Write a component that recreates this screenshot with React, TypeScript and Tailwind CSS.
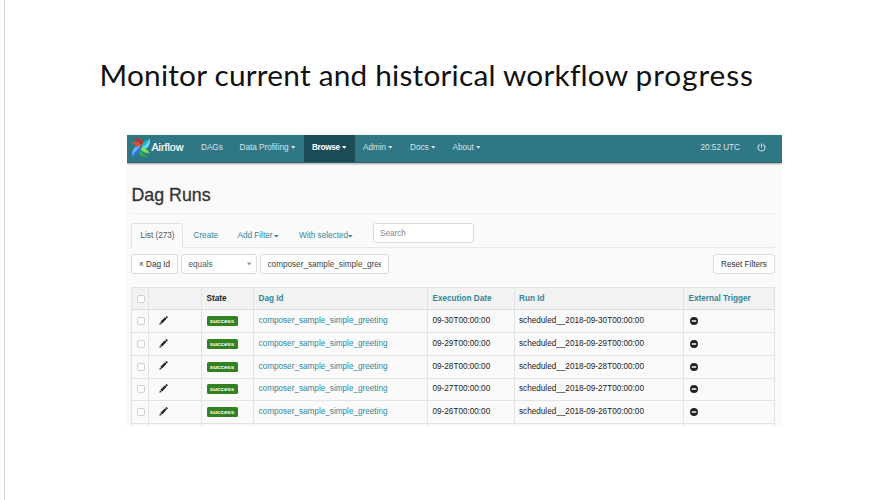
import React from 'react';

const dates = ['30', '29', '28', '27', '26'];

function Caret({ className = '' }: { className?: string }) {
  return (
    <svg viewBox="0 0 5 3" className={`h-[2.8px] w-[4.6px] shrink-0 ${className}`}>
      <path d="M0 0h5L2.5 3z" fill="currentColor" />
    </svg>
  );
}

function Pinwheel() {
  return (
    <svg viewBox="0 0 54 58" className="ml-[5.5px] mt-[3.5px] h-[19.5px] w-[18px] shrink-0">
      <path d="M27 28C20 25 8 24 0 12C10 12 20 11 29 22Z" fill="#f04a2c" />
      <path d="M27 28C31 20 24 12 5 3C20-2 39 5 35 19Z" fill="#cc2f22" />
      <path d="M27 28C28 18 38 6 54 3C48 12 46 21 38 28Z" fill="#19b8cf" />
      <path d="M27 28C37 26 45 18 54 3C56 20 46 35 35 33Z" fill="#5fdcf0" />
      <path d="M27 28C36 29 47 33 53 46C43 44 34 44 27 36Z" fill="#7be34a" />
      <path d="M27 28C24 38 32 47 48 55C32 59 18 52 20 39Z" fill="#2cb04b" />
      <path d="M27 28C28 39 18 51 2 55C8 46 9 37 16 29Z" fill="#2f70ea" />
      <path d="M27 28C19 30 10 38 2 55C-3 38 8 23 20 24Z" fill="#5fb0fa" />
      <circle cx="27" cy="28" r="2.5" fill="#315c72" />
    </svg>
  );
}

function Power() {
  return (
    <svg viewBox="0 0 24 24" className="h-[9px] w-[9px]" fill="none" stroke="currentColor" strokeWidth="2.8">
      <path d="M12 1v11M7 4a9.3 9.3 0 1 0 10 0" />
    </svg>
  );
}

function Pencil() {
  return (
    <svg viewBox="0 0 24 24" className="h-[9px] w-[9px]" fill="#222">
      <path d="M1 23l1.6-6.4 4.6 4.6zM3.8 15.2L16 3.4l4.2 4.2L8.2 19.8zM17.2 2.4l1.8-1.8q1-.8 2 0l2 2q.8 1 0 2l-1.8 1.8z" />
    </svg>
  );
}

function Minus() {
  return (
    <svg viewBox="0 0 16 16" className="h-[8px] w-[8px]">
      <circle cx="8" cy="8" r="8" fill="#222" />
      <path d="M3.5 6.5h9v3h-9z" fill="#fafafa" />
    </svg>
  );
}

function Box() {
  return <span className="block h-[8px] w-[8px] rounded-[2px] border border-[#d2d2d2] bg-white" />;
}

function Cell({ children, className = '' }: { children?: React.ReactNode; className?: string }) {
  return <div className={`flex items-center border-r border-[#e3e3e3] pl-[4.5px] ${className}`}>{children}</div>;
}

const cols = 'grid grid-cols-[17px_53px_52px_174px_86.5px_169.5px_91px]';

export default function App() {
  return (
    <div className="h-[500px] w-[896px] overflow-hidden bg-white pl-[4px]">
      <div className="h-full border-l border-[#d2d4dc]">
        <h1 className="h-[134px] whitespace-nowrap pl-[94.5px] pt-[57px] font-['Lato',sans-serif] text-[29.8px] leading-[36px] tracking-[0.22px] text-[#111]">
          Monitor current and historical workflow <span className="tracking-[0.9px]">progress</span>
        </h1>
        <div className="ml-[121.5px] h-[292px] w-[655px] overflow-hidden bg-[#fafafa] font-['Liberation_Sans',sans-serif] text-[8.18px] leading-[12px] text-[#333]">
          <nav className="mt-[0.5px] flex h-[28.5px] border-b border-[#28616c] bg-[#307786] text-[#d5e5e8] shadow-[0_1px_2px_rgba(0,0,0,0.35)]">
            <Pinwheel />
            <span className="w-[51px] pl-[1.5px] pt-[6px] text-[10.6px] text-white [-webkit-text-stroke:0.2px]">Airflow</span>
            <span className="w-[38.5px] pt-[7px]">DAGs</span>
            <span className="flex w-[64px] items-center whitespace-nowrap pb-[1px]">Data Profiling<Caret className="ml-[2px]" /></span>
            <span className="flex w-[51px] items-center bg-[#1b4b57] pb-[1px] pl-[8.5px] font-bold text-white"><span className="tracking-[-0.3px]">Browse</span><Caret className="ml-[2px]" /></span>
            <span className="flex w-[55.5px] items-center pb-[1px] pl-[8.5px]">Admin<Caret className="ml-[2px]" /></span>
            <span className="flex w-[42.5px] items-center pb-[1px]">Docs<Caret className="ml-[2px]" /></span>
            <span className="flex items-center pb-[1px]">About<Caret className="ml-[2px]" /></span>
            <span className="ml-auto flex w-[81px] items-center pb-[1px]">20:52 UTC<span className="ml-[17px] pb-[1px]"><Power /></span></span>
          </nav>
          <main className="ml-[4.5px] w-[644px]">
            <h2 className="h-[51px] border-b border-[#eee] pl-[0.5px] pt-[21px] text-[17.8px] leading-[22px] [-webkit-text-stroke:0.3px]">Dag Runs</h2>
            <div className="flex h-[33.5px] items-end border-b border-[#e8e8e8] text-[#31889a]">
              <span className="-mb-px h-[24.5px] w-[52px] rounded-t-[3px] border border-b-0 border-[#e2e2e2] bg-[#fafafa] pl-[8.5px] pt-[5.5px] text-[#555]">List (273)</span>
              <span className="h-[17px] w-[44px] pl-[10.5px]">Create</span>
              <span className="flex h-[17px] w-[61.5px] items-start pl-[10.5px] whitespace-nowrap">Add Filter<Caret className="ml-[2px] mt-[5px]" /></span>
              <span className="flex h-[17px] w-[84px] items-start pl-[10.5px] whitespace-nowrap">With selected<Caret className="mt-[5px]" /></span>
              <span className="mb-[3.5px] h-[20px] w-[101px] rounded-[3px] border border-[#dadada] bg-white pl-[6.5px] pt-[4px] text-[#888]">Search</span>
            </div>
            <div className="mt-[6.5px] flex h-[20px] whitespace-nowrap">
              <span className="w-[47px] rounded-[3px] border border-[#dadada] bg-white pl-[7px] pt-[4px]">× Dag Id</span>
              <span className="ml-[3px] flex w-[76px] items-start rounded-[3px] border border-[#dadada] bg-white pl-[6.5px] pr-[4px] pt-[3.5px] text-[#555]">equals<Caret className="ml-auto mt-[3.5px] h-[4px]! text-[#999]" /></span>
              <span className="ml-[3px] w-[129px] rounded-[3px] border border-[#dadada] bg-white pl-[6.5px] pr-[7.5px] pt-[4px] text-[#444]"><span className="block overflow-hidden">composer_sample_simple_greeting</span></span>
              <span className="ml-auto w-[62px] rounded-[3px] border border-[#dadada] bg-white pl-[7px] pt-[4px]">Reset Filters</span>
            </div>
            <div className="mt-[13px] w-[644px] border-l border-t border-[#e3e3e3] text-[#222]">
              <div className={`${cols} h-[22px] border-b border-[#dcdcdc] bg-[#f2f2f2] font-bold text-[#31889a]`}>
                <Cell><Box /></Cell><Cell /><Cell className="text-[#222]">State</Cell><Cell>Dag Id</Cell><Cell>Execution Date</Cell><Cell>Run Id</Cell><Cell>External Trigger</Cell>
              </div>
              {dates.map((d) => (
                <div key={d} className={`${cols} h-[22.85px] border-b border-[#e3e3e3]`}>
                  <Cell><Box /></Cell>
                  <Cell className="pl-[10px]! pb-[1.5px]"><Pencil /></Cell>
                  <Cell><span className="h-[10px] w-[31px] rounded-[1.5px] bg-[#328222] text-center text-[6.2px] font-bold leading-[10px] text-white">success</span></Cell>
                  <Cell className="text-[#31889a]">composer_sample_simple_greeting</Cell>
                  <Cell>09-{d}T00:00:00</Cell>
                  <Cell>scheduled__2018-09-{d}T00:00:00</Cell>
                  <Cell className="pl-[6px]!"><Minus /></Cell>
                </div>
              ))}
              <div className={`${cols} h-[5px]`}>
                <Cell /><Cell /><Cell /><Cell /><Cell /><Cell /><Cell />
              </div>
            </div>
          </main>
        </div>
      </div>
    </div>
  );
}
